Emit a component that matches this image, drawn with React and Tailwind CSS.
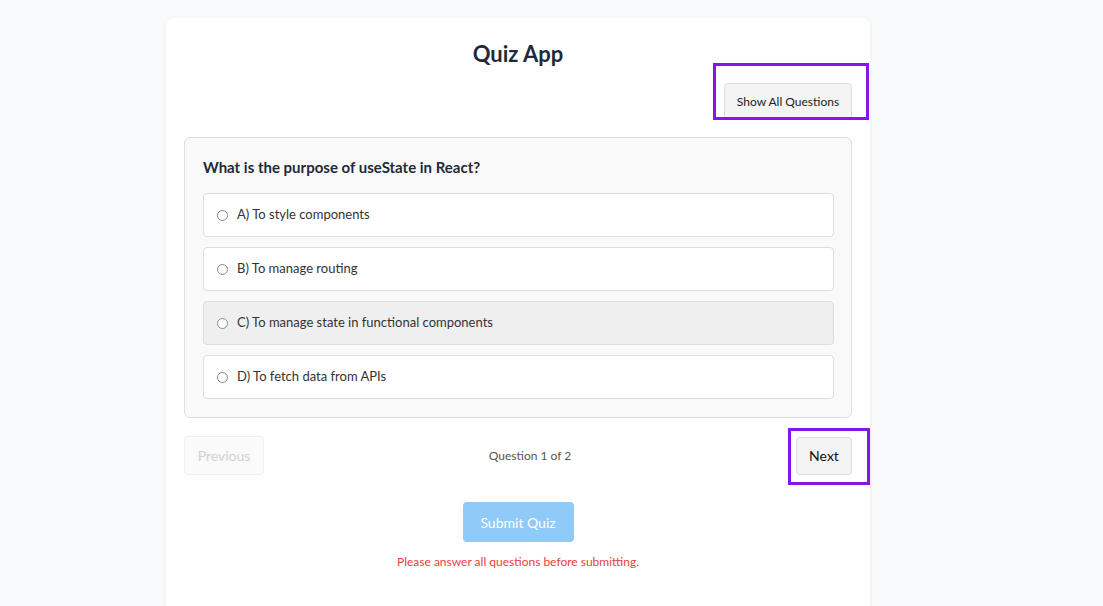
import { useState } from 'react';

const QUESTIONS = [
  {
    q: 'What is the purpose of useState in React?',
    options: [
      'A) To style components',
      'B) To manage routing',
      'C) To manage state in functional components',
      'D) To fetch data from APIs',
    ],
  },
];

const Highlight = ({ className }) => (
  <span className={`pointer-events-none absolute border-[3px] border-[#8217e6] ${className}`} />
);

const App = () => {
  const [hovered] = useState(2);
  const current = QUESTIONS[0];

  return (
    <div className="min-h-[606px] bg-[#f8f9fa] pt-[18px] font-['Lato',sans-serif] text-[#333]">
      <div className="ml-[166px] w-[704px] h-[600px] rounded-t-[8px] bg-white px-[18px] pt-[21px] shadow-[0_1px_4px_rgba(0,0,0,0.06)]">
        <h1 className="text-center text-[22px] leading-[30px] font-bold text-[#1e2a3a]">Quiz App</h1>

        <div className="mt-[14px] flex justify-end">
          <button className="relative h-[37px] w-[128px] rounded-[4px] border border-[#dddddd] bg-[#f4f4f4] text-[12px] text-[#222]">
            Show All Questions
            <Highlight className="-left-[12px] -right-[18px] -top-[21px] -bottom-[1px]" />
          </button>
        </div>

        <div className="mt-[17px] rounded-[6px] border border-[#dddddd] bg-[#f9f9f9] pl-[18px] pr-[17px] pt-[19px] pb-[18px]">
          <h2 className="text-[15px] leading-[20px] font-bold text-[#1e2a3a]">{current.q}</h2>
          <div className="mt-[16px] flex flex-col gap-[10px]">
            {current.options.map((opt, i) => (
              <div
                key={opt}
                className={`flex h-[44px] items-center gap-[9px] rounded-[4px] border border-[#dddddd] pl-[13px] text-[13px] text-[#333] ${
                  i === hovered ? 'bg-[#efefef]' : 'bg-white'
                }`}
              >
                <span className="h-[11px] w-[11px] rounded-full border border-[#8a8a8a] bg-white" />
                {opt}
              </div>
            ))}
          </div>
        </div>

        <div className="mt-[18px] flex items-center justify-between">
          <button className="h-[39px] w-[80px] rounded-[4px] border border-[#eeeeee] bg-[#fafafa] text-[14px] text-[#d0d0d0]">
            Previous
          </button>
          <span className="text-[12px] text-[#555]">Question 1 of 2</span>
          <button className="relative h-[38px] w-[56px] rounded-[4px] border border-[#dddddd] bg-[#f4f4f4] text-[14px] text-[#111]">
            Next
            <Highlight className="-left-[9px] -right-[19px] -top-[10px] -bottom-[11px]" />
          </button>
        </div>

        <div className="mt-[27px] flex flex-col items-center">
          <button className="h-[40px] w-[111px] rounded-[4px] bg-[#90caf9] text-[14px] text-white">Submit Quiz</button>
          <p className="mt-[11px] text-[12px] text-[#e53e3e]">Please answer all questions before submitting.</p>
        </div>
      </div>
    </div>
  );
};

export default App;
